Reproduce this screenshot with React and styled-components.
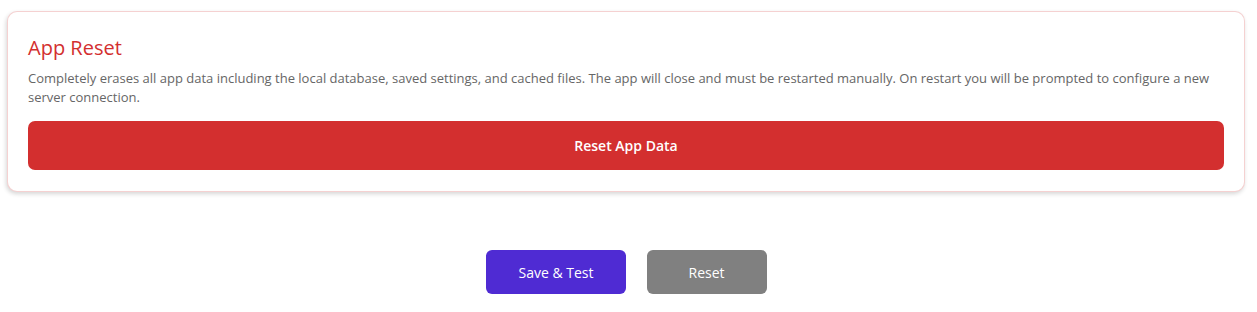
import styled, { createGlobalStyle } from "styled-components";

const GlobalStyle = createGlobalStyle`
  body {
    margin: 0;
    background: #ffffff;
    font-family: "Open Sans", "Noto Sans", sans-serif;
  }
`;

const Page = styled.div`
  padding: 11px 12px 18px 7px;
`;

const Card = styled.section`
  background: #ffffff;
  border: 1px solid rgba(211, 47, 47, 0.22);
  border-radius: 10px;
  box-shadow: -1px 2px 4px rgba(0, 0, 0, 0.16);
  padding: 22px 20px 21px;
`;

const Title = styled.h2`
  margin: 0 0 7px;
  font-size: 20px;
  font-weight: 400;
  line-height: 28px;
  color: #d32f2f;
`;

const Description = styled.p`
  margin: 0 0 14px;
  font-size: 13px;
  line-height: 19px;
  color: #666666;
`;

const DangerButton = styled.button`
  display: block;
  width: 100%;
  height: 49px;
  border: none;
  border-radius: 7px;
  background: #d32f2f;
  color: #ffffff;
  font-family: inherit;
  font-size: 14px;
  font-weight: 600;
  cursor: pointer;
`;

const Actions = styled.div`
  display: flex;
  justify-content: center;
  gap: 21px;
  margin-top: 58px;
  padding-left: 1px;
`;

const ActionButton = styled.button`
  height: 44px;
  padding: 0 ${(p) => p.$pad}px;
  border: none;
  border-radius: 6px;
  background: ${(p) => p.$bg};
  color: #ffffff;
  font-family: inherit;
  font-size: 14px;
  font-weight: 400;
  cursor: pointer;
`;

export default function App() {
  return (
    <>
      <GlobalStyle />
      <Page>
        <Card>
          <Title>App Reset</Title>
          <Description>
            Completely erases all app data including the local database, saved
            settings, and cached files. The app will close and must be restarted
            manually. On restart you will be prompted to configure a new server
            connection.
          </Description>
          <DangerButton>Reset App Data</DangerButton>
        </Card>
        <Actions>
          <ActionButton $bg="#4f2bd3" $pad={32}>Save &amp; Test</ActionButton>
          <ActionButton $bg="#808080" $pad={42}>Reset</ActionButton>
        </Actions>
      </Page>
    </>
  );
}
